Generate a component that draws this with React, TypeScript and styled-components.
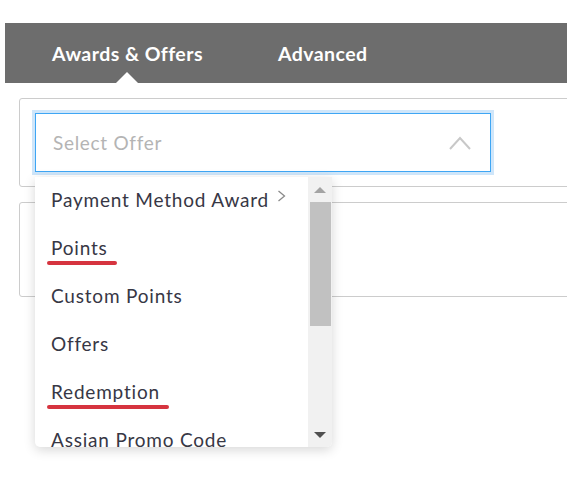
import React from 'react';
import styled, { createGlobalStyle } from 'styled-components';

const GlobalStyle = createGlobalStyle`
  html, body {
    margin: 0;
    padding: 0;
    background: #fff;
  }
  body {
    font-family: Lato, "Open Sans", sans-serif;
  }
`;

const offers = [
  { label: 'Payment Method Award', nested: true },
  { label: 'Points', marked: true },
  { label: 'Custom Points' },
  { label: 'Offers' },
  { label: 'Redemption', marked: true },
  { label: 'Assian Promo Code' },
];

export default function App() {
  return (
    <>
      <GlobalStyle />
      <Page>
        <TabBar>
          <Tab $active>Awards &amp; Offers</Tab>
          <Tab>Advanced</Tab>
        </TabBar>
        <Content>
          <Card $height={89} $raised>
            <SelectWrap>
              <Select>
                <Placeholder>Select Offer</Placeholder>
                <svg width="22" height="14" viewBox="0 0 22 14">
                  <polyline points="1,13 11,2 21,13" fill="none" stroke="#c8c8c8" strokeWidth="2" />
                </svg>
              </Select>
              <Dropdown>
                <List>
                  {offers.map((o) => (
                    <Item key={o.label}>
                      {o.marked ? <Marked>{o.label}</Marked> : o.label}
                      {o.nested && (
                        <NestArrow width="9" height="12" viewBox="0 0 9 12">
                          <polyline points="1.5,1 7.5,6 1.5,11" fill="none" stroke="#8a8a8a" strokeWidth="1.3" />
                        </NestArrow>
                      )}
                    </Item>
                  ))}
                </List>
                <Scrollbar>
                  <ScrollArrow $up $disabled />
                  <ScrollTrack>
                    <Thumb />
                  </ScrollTrack>
                  <ScrollArrow />
                </Scrollbar>
              </Dropdown>
            </SelectWrap>
          </Card>
          <Card $height={95} />
        </Content>
      </Page>
    </>
  );
}

const Page = styled.div`
  width: 567px;
  height: 490px;
  box-sizing: border-box;
  overflow: hidden;
  padding: 23px 0 0 5px;
`;

const TabBar = styled.div`
  height: 60px;
  background: #6d6d6d;
  display: flex;
  align-items: center;
  gap: 75px;
  padding-left: 47px;
`;

const Tab = styled.div<{ $active?: boolean }>`
  position: relative;
  height: 100%;
  display: flex;
  align-items: center;
  color: #fff;
  font-size: 19.5px;
  font-weight: 700;
  letter-spacing: 0.45px;
  ${(p) =>
    p.$active &&
    `
    &::after {
      content: '';
      position: absolute;
      bottom: 0;
      left: 50%;
      margin-left: -11px;
      border-left: 11px solid transparent;
      border-right: 11px solid transparent;
      border-bottom: 11px solid #fff;
    }
  `}
`;

const Content = styled.div`
  padding: 15px 0 0 14px;
  margin-right: -40px;
  display: flex;
  flex-direction: column;
  gap: 15px;
`;

const Card = styled.div<{ $height: number; $raised?: boolean }>`
  position: relative;
  z-index: ${(p) => (p.$raised ? 2 : 1)};
  height: ${(p) => p.$height}px;
  box-sizing: border-box;
  border: 1px solid #cccccc;
  border-radius: 3px;
  padding: 14px 0 0 15px;
`;

const SelectWrap = styled.div`
  position: relative;
  width: 456px;
`;

const Select = styled.div`
  height: 59px;
  box-sizing: border-box;
  border: 1px solid #3ea6f4;
  box-shadow: 0 0 0 3px #cfe6fa;
  display: flex;
  align-items: center;
  justify-content: space-between;
  padding: 0 19px 0 17px;
`;

const Placeholder = styled.span`
  color: #b4b4b4;
  font-size: 19px;
  letter-spacing: 0.7px;
`;

const Dropdown = styled.div`
  position: absolute;
  top: 64px;
  left: 0;
  width: 297px;
  height: 270px;
  background: #fff;
  border-radius: 0 0 5px 5px;
  box-shadow: 0 3px 12px rgba(0, 0, 0, 0.16);
  display: flex;
  overflow: hidden;
`;

const List = styled.div`
  flex: 1;
`;

const Item = styled.div`
  height: 48px;
  box-sizing: border-box;
  padding: 0 0 4px 16px;
  display: flex;
  align-items: center;
  color: #373745;
  font-size: 19px;
  letter-spacing: 0.8px;
  white-space: nowrap;
`;

const Marked = styled.span`
  position: relative;
  &::after {
    content: '';
    position: absolute;
    left: -4px;
    right: -9px;
    bottom: -6px;
    height: 4px;
    border-radius: 2px;
    background: #d6343f;
  }
`;

const NestArrow = styled.svg`
  margin-left: 8px;
  margin-top: -6px;
`;

const Scrollbar = styled.div`
  width: 24px;
  background: #f1f1f1;
  display: flex;
  flex-direction: column;
`;

const ScrollArrow = styled.div<{ $up?: boolean; $disabled?: boolean }>`
  height: 25px;
  display: flex;
  align-items: center;
  justify-content: center;
  &::before {
    content: '';
    border-left: 6px solid transparent;
    border-right: 6px solid transparent;
    ${(p) =>
      p.$up
        ? `border-bottom: 6px solid ${p.$disabled ? '#a3a3a3' : '#505050'};`
        : `border-top: 6px solid ${p.$disabled ? '#a3a3a3' : '#505050'};`}
  }
`;

const ScrollTrack = styled.div`
  flex: 1;
  padding: 0 1px 0 2px;
`;

const Thumb = styled.div`
  height: 124px;
  background: #c1c1c1;
`;
